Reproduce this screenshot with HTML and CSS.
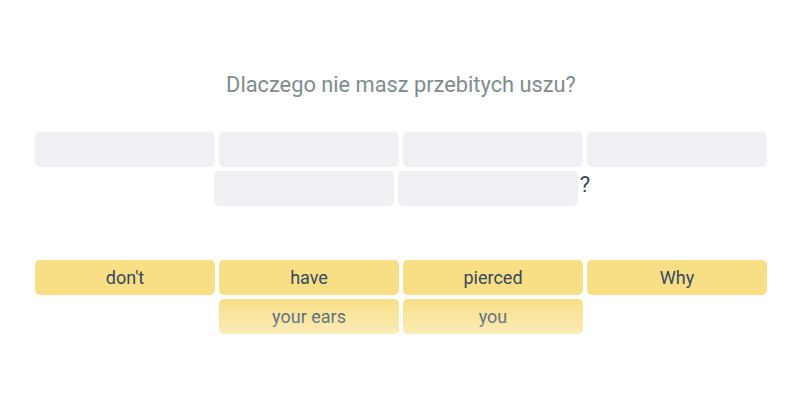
FILE: index.html
```html
<!DOCTYPE html>
<html>
<head>
<meta charset="utf-8">
<link rel="stylesheet" href="styles.css">
</head>
<body>
<div class="page">
  <div class="title">Dlaczego nie masz przebitych uszu?</div>
  <div class="answer">
    <div class="slot"></div>
    <div class="slot"></div>
    <div class="slot"></div>
    <div class="slot"></div>
    <div class="slot"></div>
    <div class="slot"></div>
    <span class="punct">?</span>
  </div>
  <div class="bank">
    <div class="chip">don't</div>
    <div class="chip">have</div>
    <div class="chip">pierced</div>
    <div class="chip">Why</div>
    <div class="chip">your ears</div>
    <div class="chip">you</div>
  </div>
</div>
</body>
</html>
```
FILE: styles.css
```css
html, body {
  margin: 0;
  padding: 0;
  background: #ffffff;
}
body {
  font-family: Roboto, "Liberation Sans", sans-serif;
  width: 800px;
  height: 400px;
  overflow: hidden;
}
.page {
  padding-left: 2px;
}
.title {
  margin-top: 73px;
  height: 24px;
  line-height: 24px;
  font-size: 21.8px;
  color: #7f8c8d;
  text-align: center;
}
.answer, .bank {
  width: 736px;
  margin: 0 auto;
  display: flex;
  flex-wrap: wrap;
  justify-content: center;
}
.answer {
  margin-top: 33px;
  min-height: 78px;
}
.slot {
  width: 180px;
  height: 35px;
  margin: 2px;
  border-radius: 5px;
  background: #eff0f4;
}
.punct {
  align-self: center;
  font-size: 22px;
  line-height: 24px;
  color: #34495e;
  margin-bottom: 8px;
}
.bank {
  margin-top: 50px;
  position: relative;
}
.bank::after {
  content: "";
  position: absolute;
  left: 0;
  right: 0;
  top: 40px;
  height: 40px;
  background: linear-gradient(rgba(255,255,255,0), rgba(255,255,255,0.45));
  pointer-events: none;
}
.chip {
  width: 180px;
  height: 35px;
  margin: 2px;
  border-radius: 5px;
  background: #f8df86;
  color: #34495e;
  font-size: 18px;
  line-height: 35px;
  text-align: center;
}
```
